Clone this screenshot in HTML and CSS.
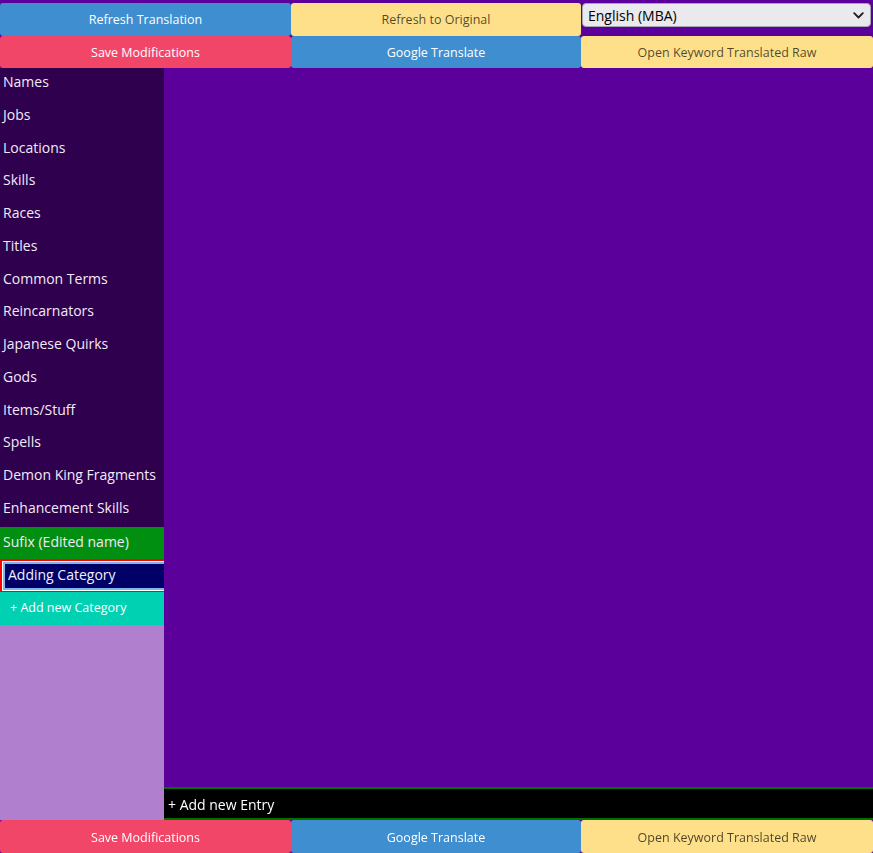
FILE: index.html
```html
<!DOCTYPE html>
<html lang="en">
<head>
<meta charset="utf-8">
<title>Keyword Translator</title>
<link rel="stylesheet" href="styles.css">
</head>
<body>
<div class="app">
  <div class="toolbar top">
    <button class="btn info">Refresh Translation</button>
    <button class="btn warning">Refresh to Original</button>
    <div class="select-cell">
      <select class="lang">
        <option>English (MBA)</option>
        <option>English (Google)</option>
      </select>
      <svg class="chevron" width="11" height="7" viewBox="0 0 11 7" aria-hidden="true">
        <polyline points="1.2,1.2 5.5,5.5 9.8,1.2" fill="none" stroke="#1e1e1e" stroke-width="1.8" stroke-linecap="round" stroke-linejoin="round"/>
      </svg>
    </div>
    <button class="btn danger">Save Modifications</button>
    <button class="btn info">Google Translate</button>
    <button class="btn warning">Open Keyword Translated Raw</button>
  </div>
  <div class="workspace">
    <nav class="sidebar">
      <div class="cat">Names</div>
      <div class="cat">Jobs</div>
      <div class="cat">Locations</div>
      <div class="cat">Skills</div>
      <div class="cat">Races</div>
      <div class="cat">Titles</div>
      <div class="cat">Common Terms</div>
      <div class="cat">Reincarnators</div>
      <div class="cat">Japanese Quirks</div>
      <div class="cat">Gods</div>
      <div class="cat">Items/Stuff</div>
      <div class="cat">Spells</div>
      <div class="cat">Demon King Fragments</div>
      <div class="cat">Enhancement Skills</div>
      <div class="cat active">Sufix (Edited name)</div>
      <div class="cat-input"><input class="new-cat" type="text" value="Adding Category" autofocus></div>
      <div class="add-cat">+ Add new Category</div>
    </nav>
    <main class="content">
      <div class="entries"></div>
      <div class="add-entry">+ Add new Entry</div>
    </main>
  </div>
  <div class="toolbar bottom">
    <button class="btn danger">Save Modifications</button>
    <button class="btn info">Google Translate</button>
    <button class="btn warning">Open Keyword Translated Raw</button>
  </div>
</div>
</body>
</html>
```
FILE: styles.css
```css
html, body {
  margin: 0;
  padding: 0;
  height: 100%;
}
body {
  background: #5c009c;
  font-family: "Open Sans", "Noto Sans", sans-serif;
  overflow: hidden;
}
.app {
  height: 100vh;
  display: flex;
  flex-direction: column;
  padding-top: 3px;
  box-sizing: border-box;
}
.toolbar {
  display: grid;
  grid-template-columns: 291px 290px 1fr;
}
.toolbar.top {
  grid-template-rows: 33px 32px;
}
.toolbar.bottom {
  grid-template-rows: 33px;
}
.btn {
  border: 0;
  margin: 0;
  border-radius: 3px;
  font-family: "Open Sans", "Noto Sans", sans-serif;
  font-size: 12.5px;
  cursor: pointer;
  padding: 0 12px;
}
.toolbar.bottom .btn {
  padding-top: 2px;
}
.btn.info { background: #3e8ed0; color: #fff; }
.btn.warning { background: #ffe08a; color: rgba(0,0,0,0.7); }
.btn.danger { background: #f14668; color: #fff; }

.select-cell {
  position: relative;
  padding-left: 1px;
  padding-right: 2px;
}
.lang {
  -webkit-appearance: none;
  appearance: none;
  display: block;
  width: 100%;
  height: 24px;
  box-sizing: border-box;
  margin: 0;
  padding: 0 24px 0 5px;
  background: #e9e9ee;
  border: 1px solid #a6a6b0;
  border-radius: 4px;
  font-family: "Open Sans", "Noto Sans", sans-serif;
  font-size: 14px;
  color: #000;
  outline: none;
}
.chevron {
  position: absolute;
  right: 9px;
  top: 9px;
  pointer-events: none;
}

.workspace {
  flex: 1;
  display: flex;
  min-height: 0;
}
.sidebar {
  width: 164px;
  flex: none;
  background: #b07fce;
  overflow: hidden;
  display: flex;
  flex-direction: column;
}
.cat {
  height: 32.75px;
  box-sizing: border-box;
  line-height: 28px;
  padding: 0 0 4.75px 3px;
  background: #2e004d;
  color: #f2eaf8;
  font-size: 14px;
  white-space: nowrap;
}
.cat.active {
  background: #008f11;
  line-height: 29px;
  padding-bottom: 3.75px;
}
.cat-input {
  height: 33px;
  box-sizing: border-box;
  background: #ff0000;
  padding: 2px 0 1px 2px;
}
.new-cat {
  display: block;
  width: 162px;
  height: 30px;
  box-sizing: border-box;
  margin: 0;
  border: 1px solid #ffffff;
  border-right: 0;
  box-shadow: inset 2px 0 0 #7fb6ee, inset 0 2px 0 #7fb6ee, inset 0 -2px 0 #7fb6ee;
  background: #000066;
  color: #f0f0ff;
  caret-color: #ffffff;
  font-family: "Open Sans", "Noto Sans", sans-serif;
  font-size: 14px;
  padding: 0 4px 3px 5px;
  outline: none;
}
.add-cat {
  height: 33px;
  line-height: 32px;
  padding-left: 10px;
  background: #00d1b2;
  color: #fff;
  font-size: 12.5px;
}
.content {
  flex: 1;
  display: flex;
  flex-direction: column;
  background: #5c009c;
}
.entries {
  flex: 1;
}
.add-entry {
  height: 33px;
  box-sizing: border-box;
  background: #000;
  border-top: 2px solid #007000;
  border-bottom: 2px solid #007000;
  color: #fff;
  font-size: 14px;
  line-height: 31px;
  padding-left: 4px;
}
```
